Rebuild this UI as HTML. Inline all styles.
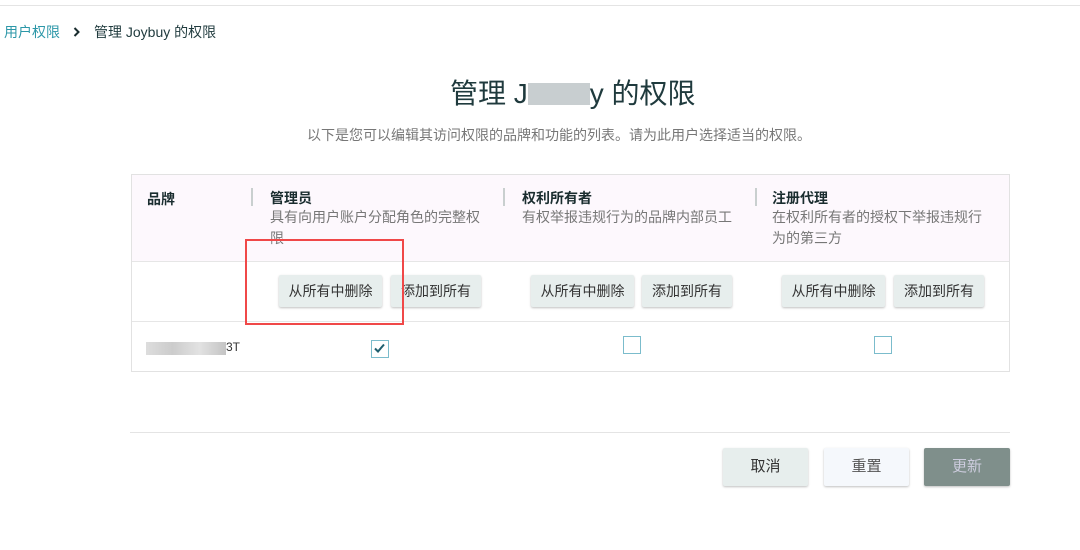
<!DOCTYPE html>
<html><head><meta charset="utf-8"><style>
*{margin:0;padding:0;box-sizing:border-box}
body{width:1080px;height:550px;background:#fff;font-family:"Liberation Sans","Noto Sans CJK SC",sans-serif;position:relative;overflow:hidden;color:#1f3a3d}
.a{position:absolute;white-space:nowrap}
.btn{position:absolute;background:#e7eeed;border-radius:2px;box-shadow:0 1px 2px rgba(0,0,0,.25);font-size:14px;color:#333;text-align:center;line-height:32px;height:32px}
.sep{position:absolute;width:2px;height:18px;background:#c9cfcf;top:188px}
.h{font-size:14px;font-weight:bold;color:#1a2d2f;line-height:18px}
.d{font-size:14px;color:#777;line-height:21px;white-space:normal;width:222px}
.cb{position:absolute;width:18px;height:18px;border:1.5px solid #7bbccc;background:#fff}
</style></head><body>
<div class="a" style="left:0;top:5px;width:1080px;height:1px;background:#e4e4e4"></div>
<div class="a" style="left:4px;top:22px;font-size:14px"><span style="color:#2c97a8">用户权限</span><svg width="10" height="12" viewBox="0 0 10 12" style="margin:0 12px 0 12px;vertical-align:-1px"><path d="M2.5 2l4 4-4 4" stroke="#1a2d2f" stroke-width="2" fill="none"/></svg>管理 Joybuy 的权限</div>
<div class="a" style="left:450px;top:72px;font-size:28px;color:#1f3a3d">管理 J<span style="display:inline-block;width:62px;height:22px;background:#c8ced0;vertical-align:-2px"></span>y 的权限</div>
<div class="a" style="left:307px;top:125px;font-size:14px;color:#777">以下是您可以编辑其访问权限的品牌和功能的列表。请为此用户选择适当的权限。</div>
<div class="a" style="left:131px;top:174px;width:879px;height:198px;border:1px solid #e2e2e2"></div>
<div class="a" style="left:132px;top:175px;width:877px;height:87px;background:#fdf8fd;border-bottom:1px solid #e6e6e6"></div>
<div class="a" style="left:132px;top:321px;width:877px;height:1px;background:#e6e6e6"></div>
<div class="a h" style="left:147px;top:190px">品牌</div>
<div class="sep" style="left:251px"></div><div class="sep" style="left:503px"></div><div class="sep" style="left:755px"></div>
<div class="a" style="left:270px;top:189px"><div class="h">管理员</div><div class="d">具有向用户账户分配角色的完整权限</div></div>
<div class="a" style="left:522px;top:189px"><div class="h">权利所有者</div><div class="d">有权举报违规行为的品牌内部员工</div></div>
<div class="a" style="left:772px;top:189px"><div class="h">注册代理</div><div class="d">在权利所有者的授权下举报违规行为的第三方</div></div>
<div class="btn" style="left:279px;top:275px;width:103px">从所有中删除</div>
<div class="btn" style="left:391px;top:275px;width:90px">添加到所有</div>
<div class="btn" style="left:531px;top:275px;width:103px">从所有中删除</div>
<div class="btn" style="left:642px;top:275px;width:90px">添加到所有</div>
<div class="btn" style="left:782px;top:275px;width:103px">从所有中删除</div>
<div class="btn" style="left:894px;top:275px;width:90px">添加到所有</div>
<div class="a" style="left:146px;top:342px;width:80px;height:13px;background:linear-gradient(90deg,#ddd,#ccc,#e2e2e2,#c4c4c4)"></div>
<div class="a" style="left:226px;top:340px;font-size:12px;color:#333">3T</div>
<div class="cb" style="left:371px;top:340px"><svg width="15" height="15" viewBox="0 0 15 15" style="position:absolute;left:0;top:0"><path d="M3 7.5l3 3 6-7" stroke="#1f5f6f" stroke-width="2" fill="none"/></svg></div>
<div class="cb" style="left:623px;top:336px"></div>
<div class="cb" style="left:874px;top:336px"></div>
<div class="a" style="left:245px;top:239px;width:159px;height:86px;border:2px solid #f04848"></div>
<div class="a" style="left:130px;top:432px;width:880px;height:1px;background:#e4e4e4"></div>
<div class="btn" style="left:723px;top:448px;width:85px;height:38px;line-height:38px;background:#e7eeed;font-size:15px">取消</div>
<div class="btn" style="left:824px;top:448px;width:85px;height:38px;line-height:38px;background:#f5f8fc;font-size:15px;color:#555">重置</div>
<div class="btn" style="left:924px;top:448px;width:86px;height:38px;line-height:38px;background:#7f8f8b;font-size:15px;color:#ccd">更新</div>
</body></html>
